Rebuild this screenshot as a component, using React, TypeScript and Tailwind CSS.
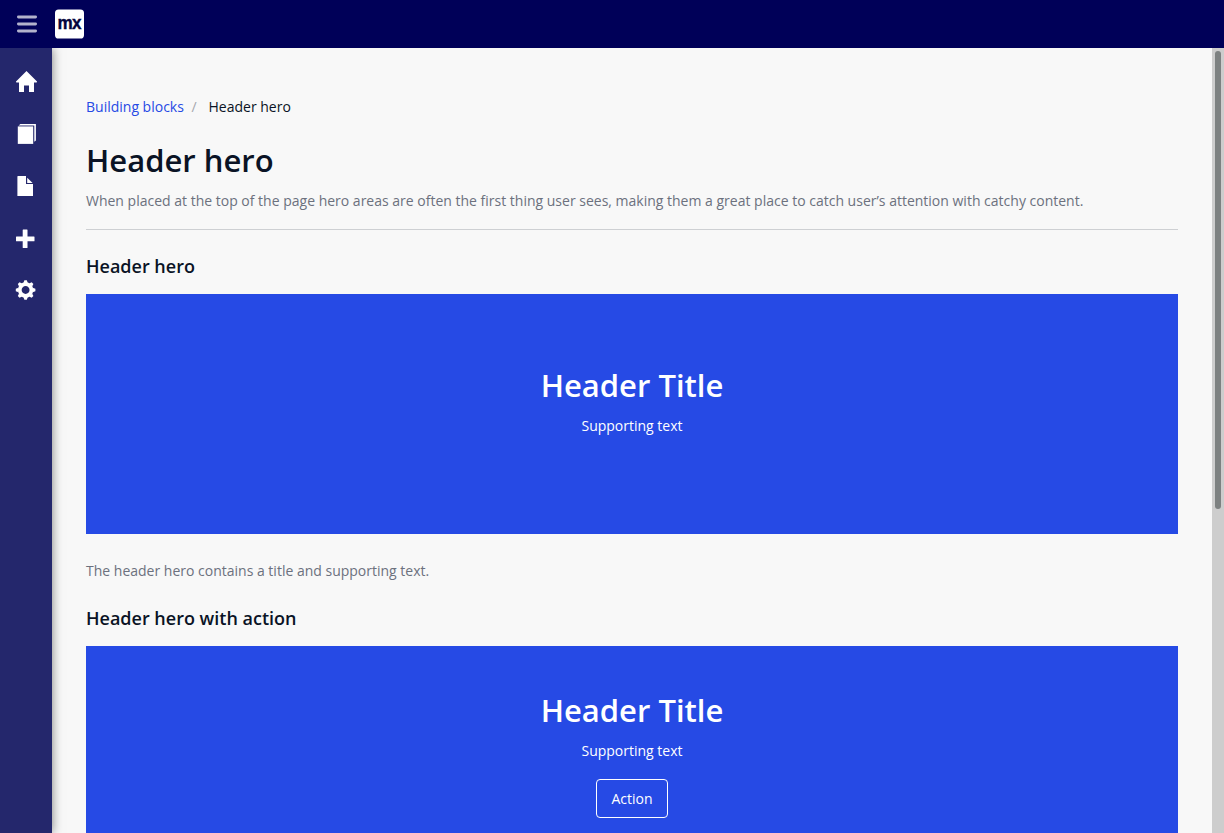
import React from "react";

function MenuIcon() {
  return (
    <svg width="20" height="20" viewBox="0 0 20 20" fill="#b2b2cc">
      <rect x="0" y="1.4" width="20" height="3" rx="1.4" />
      <rect x="0" y="8.4" width="20" height="3" rx="1.4" />
      <rect x="0" y="15.4" width="20" height="3" rx="1.4" />
    </svg>
  );
}

function HomeIcon() {
  return (
    <svg width="52" height="52" viewBox="0 0 52 52" fill="#fff">
      <path d="M26.5 15 37 25.4Q37.3 26.4 36.2 26.4H34V36H29V29.5H24V36H19V26.4H16.8Q15.7 26.4 16 25.4Z" />
    </svg>
  );
}

function CopiesIcon() {
  return (
    <svg width="52" height="52" viewBox="0 0 52 52" fill="#fff">
      <path d="M17.8 18.4H33.2V35.9H17.8Z" />
      <path d="M18.6 17.5 20.4 16H35.9V32.4L34.3 33.8V17.5Z" />
    </svg>
  );
}

function FileIcon() {
  return (
    <svg width="52" height="52" viewBox="0 0 52 52" fill="#fff">
      <path d="M18 16H26V24H33V36H17.4V16.6Q17.4 16 18 16Z" />
      <path d="M27.2 17.7 32.6 22.9H27.2Z" />
    </svg>
  );
}

function PlusIcon() {
  return (
    <svg width="52" height="52" viewBox="0 0 52 52" fill="#fff">
      <path d="M23.2 17.5H27Q27.5 17.5 27.5 18V24.4H34Q34.5 24.4 34.5 24.9V28.7Q34.5 29.2 34 29.2H27.5V35.5Q27.5 36 27 36H23.2Q22.7 36 22.7 35.5V29.2H16.5Q16 29.2 16 28.7V24.9Q16 24.4 16.5 24.4H22.7V18Q22.7 17.5 23.2 17.5Z" />
    </svg>
  );
}

const gearTeeth = [0, 45, 90, 135, 180, 225, 270, 315];

function GearIcon() {
  return (
    <svg width="52" height="52" viewBox="0 0 52 52" fill="#fff">
      <g transform="translate(25.6 26)">
        <circle r="5.8" fill="none" stroke="#fff" strokeWidth="3.7" />
        {gearTeeth.map((angle) => (
          <path key={angle} d="M-2.2-7-1.2-9.8H1.2L2.2-7Z" transform={`rotate(${angle})`} />
        ))}
      </g>
    </svg>
  );
}

function Hero({ action = false }: { action?: boolean }) {
  return (
    <div
      className={
        "flex h-[240px] flex-col items-center bg-[#264ae5] text-white " +
        (action ? "pt-11" : "pt-[71px]")
      }
    >
      <h2 className="text-[31px] leading-10 font-semibold">Header Title</h2>
      <p className="mt-[11px] leading-5">Supporting text</p>
      {action && (
        <button className="mt-[18px] h-[39px] w-[72px] rounded-[4px] border border-white leading-5">
          Action
        </button>
      )}
    </div>
  );
}

export default function App() {
  return (
    <div className="flex h-[833px] flex-col overflow-hidden bg-[#f8f8f8] font-['Open_Sans',sans-serif] text-sm text-[#0a1325]">
      <header className="flex h-12 shrink-0 items-center bg-[#000058] pl-[17px]">
        <MenuIcon />
        <svg className="ml-[18px]" width="29" height="30" viewBox="0 0 29 30">
          <rect y="0.5" width="29" height="29" rx="3.6" fill="#fff" />
          <text
            transform="translate(2.6 20.1) scale(0.9 1)"
            className="fill-[#04043c] stroke-[#04043c] font-['Liberation_Sans',sans-serif] text-[19px] font-bold tracking-[-1px]"
            strokeWidth="0.4"
          >
            mx
          </text>
        </svg>
      </header>
      <div className="flex min-h-0 flex-1">
        <nav className="z-10 flex w-[52px] shrink-0 flex-col bg-[#24276c] pt-2 shadow-[0_0_10px_rgba(0,0,0,0.5)] [clip-path:inset(0_-20px_0_0)]">
          <HomeIcon />
          <CopiesIcon />
          <FileIcon />
          <PlusIcon />
          <GearIcon />
        </nav>
        <main className="min-w-0 flex-1 overflow-hidden px-[34px] pt-[49px]">
          <div className="flex leading-5">
            <a className="text-[#264ae5]">Building blocks</a>
            <span className="ml-[7.5px] text-[#a5a7ae]">/</span>
            <span className="ml-3">Header hero</span>
          </div>
          <h1 className="mt-[23px] text-[31px] leading-10 font-semibold">Header hero</h1>
          <p className="mt-[11px] leading-5 text-[#6c717e]">
            When placed at the top of the page hero areas are often the first thing user sees, making them a great place to catch user’s attention with catchy content.
          </p>
          <hr className="mt-[18px] border-[#ced0d3]" />
          <h3 className="mt-6 mb-4 text-lg leading-6 font-semibold">Header hero</h3>
          <Hero />
          <p className="mt-[27px] leading-5 text-[#6c717e]">The header hero contains a title and supporting text.</p>
          <h3 className="mt-[25px] mb-4 text-lg leading-6 font-semibold">Header hero with action</h3>
          <Hero action />
        </main>
        <div className="w-3 shrink-0 bg-[#cdcdcd] pt-[3px] pl-[3px]">
          <div className="h-[458px] w-[6px] rounded-full bg-[#7d8181]" />
        </div>
      </div>
    </div>
  );
}
